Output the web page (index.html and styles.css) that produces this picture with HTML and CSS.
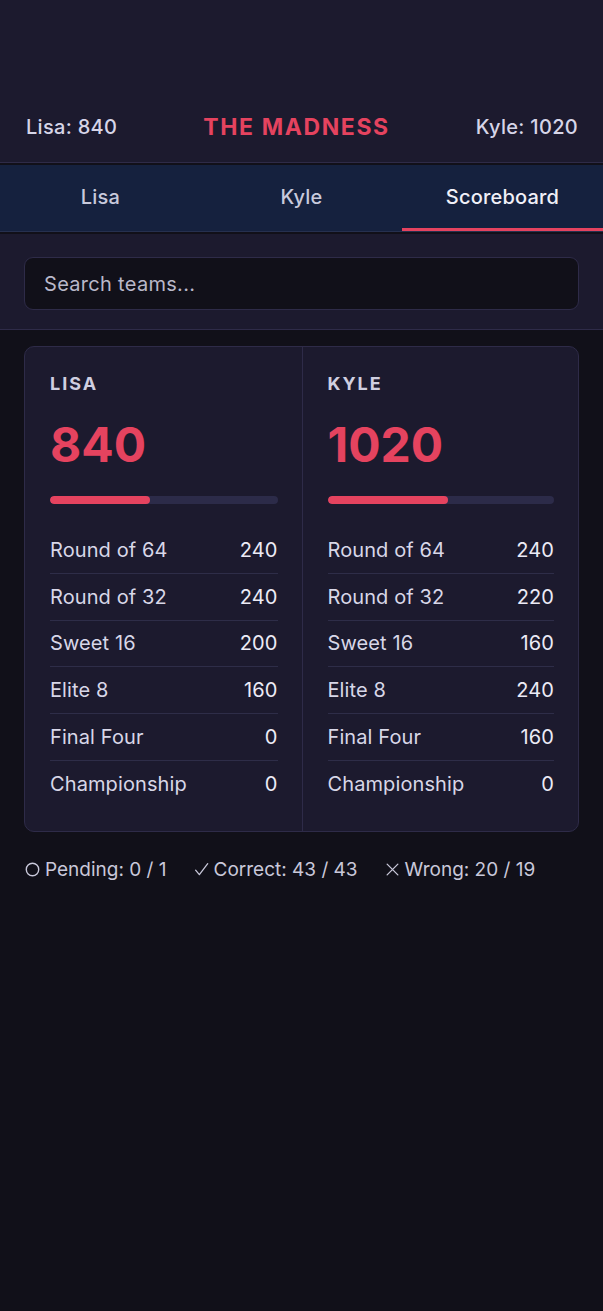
FILE: index.html
```html
<!DOCTYPE html>
<html lang="en">
<head>
<meta charset="utf-8">
<title>The Madness</title>
<link rel="stylesheet" href="styles.css">
</head>
<body>
<header class="top">
  <span class="top-score">Lisa: 840</span>
  <span class="brand">THE MADNESS</span>
  <span class="top-score">Kyle: 1020</span>
</header>
<nav class="tabs">
  <div class="tab">Lisa</div>
  <div class="tab">Kyle</div>
  <div class="tab active">Scoreboard</div>
</nav>
<section class="search-wrap">
  <input class="search" type="text" placeholder="Search teams...">
</section>
<main class="content">
  <div class="card">
    <div class="col">
      <div class="name">LISA</div>
      <div class="score">840</div>
      <div class="bar"><div class="fill" style="width:44%"></div></div>
      <div class="rows">
        <div class="row"><span>Round of 64</span><span>240</span></div>
        <div class="row"><span>Round of 32</span><span>240</span></div>
        <div class="row"><span>Sweet 16</span><span>200</span></div>
        <div class="row"><span>Elite 8</span><span>160</span></div>
        <div class="row"><span>Final Four</span><span>0</span></div>
        <div class="row"><span>Championship</span><span>0</span></div>
      </div>
    </div>
    <div class="col">
      <div class="name">KYLE</div>
      <div class="score">1020</div>
      <div class="bar"><div class="fill" style="width:53%"></div></div>
      <div class="rows">
        <div class="row"><span>Round of 64</span><span>240</span></div>
        <div class="row"><span>Round of 32</span><span>220</span></div>
        <div class="row"><span>Sweet 16</span><span>160</span></div>
        <div class="row"><span>Elite 8</span><span>240</span></div>
        <div class="row"><span>Final Four</span><span>160</span></div>
        <div class="row"><span>Championship</span><span>0</span></div>
      </div>
    </div>
  </div>
  <div class="stats">
    <span class="stat"><svg class="ico" viewBox="0 0 14 14" width="15" height="15"><circle cx="7" cy="7" r="5.8" fill="none" stroke="currentColor" stroke-width="1.3"/></svg>Pending: 0 / 1</span>
    <span class="stat"><svg class="ico" viewBox="0 0 14 14" width="15" height="15"><path d="M1.5 7.6 L5 11.8 L12.8 1.6" fill="none" stroke="currentColor" stroke-width="1.2" stroke-linecap="round" stroke-linejoin="round"/></svg>Correct: 43 / 43</span>
    <span class="stat"><svg class="ico" viewBox="0 0 14 14" width="15" height="15"><path d="M2 2 L12 12 M12 2 L2 12" fill="none" stroke="currentColor" stroke-width="1.2" stroke-linecap="round"/></svg>Wrong: 20 / 19</span>
  </div>
</main>
</body>
</html>
```
FILE: styles.css
```css
* { box-sizing: border-box; }
html, body { margin: 0; padding: 0; }
body {
  background: #111019;
  font-family: Inter, "Noto Sans", sans-serif;
  color: #d4d3e4;
  min-height: 1311px;
}
.top {
  height: 163px;
  background: #1c1a2e;
  border-bottom: 1px solid #2e2b48;
  display: flex;
  align-items: flex-end;
  justify-content: space-between;
  padding: 0 25px 20px 26px;
}
.top-score {
  font-size: 20px;
  font-weight: 500;
  letter-spacing: 0.3px;
  color: #d6d5e8;
  line-height: 30px;
}
.brand {
  font-size: 23px;
  font-weight: 700;
  letter-spacing: 1.6px;
  color: #e5435f;
  line-height: 30px;
}
.tabs {
  margin-top: 2px;
  height: 67px;
  background: #15213e;
  border-bottom: 1px solid #26304f;
  display: flex;
}
.tab {
  flex: 1;
  display: flex;
  align-items: center;
  justify-content: center;
  font-size: 20px;
  font-weight: 500;
  letter-spacing: 0.2px;
  color: #c8cadc;
  border-bottom: 3px solid transparent;
  padding-top: 1px;
}
.tab.active {
  color: #f0f0f8;
  border-bottom-color: #e5435f;
}
.search-wrap {
  margin-top: 2px;
  background: #1c1a2e;
  border-bottom: 1px solid #2e2b48;
  padding: 23px 24px 19px 24px;
}
.search {
  display: block;
  width: 100%;
  height: 53px;
  background: #111019;
  border: 1px solid #2e2b48;
  border-radius: 9px;
  padding: 0 19px;
  font-family: Inter, "Noto Sans", sans-serif;
  font-size: 20px;
  letter-spacing: 0.3px;
  color: #d4d3e4;
  outline: none;
}
.search::placeholder { color: #b9b8c9; }
.content {
  padding: 16px 24px;
}
.card {
  display: grid;
  grid-template-columns: 1fr 1fr;
  background: #1c1a2e;
  border: 1px solid #2e2b48;
  border-radius: 10px;
}
.col {
  padding: 26px 24px 23px 25px;
}
.col + .col {
  border-left: 1px solid #2e2b48;
}
.name {
  font-size: 18px;
  font-weight: 700;
  letter-spacing: 2px;
  color: #d0cfe0;
  line-height: 22px;
}
.score {
  margin-top: 25px;
  font-size: 48px;
  font-weight: 700;
  color: #e5435f;
  line-height: 50px;
}
.bar {
  margin-top: 26px;
  height: 8px;
  border-radius: 4px;
  background: #2c2b49;
  overflow: hidden;
}
.fill {
  height: 100%;
  background: #e5435f;
  border-radius: 4px;
}
.rows {
  margin-top: 23px;
}
.row {
  display: flex;
  justify-content: space-between;
  height: 46.8px;
  align-items: center;
  border-bottom: 1px solid #2e2d48;
  font-size: 20px;
  letter-spacing: 0.1px;
  color: #d8d7e8;
}
.row:last-child { border-bottom: none; }
.row span:last-child { color: #ecebf6; }
.stats {
  margin-top: 26px;
  display: flex;
  gap: 27px;
  font-size: 19px;
  color: #c9c8da;
  padding-left: 1px;
}
.stat {
  display: flex;
  align-items: center;
  gap: 5px;
}
.ico { flex: none; }
```
